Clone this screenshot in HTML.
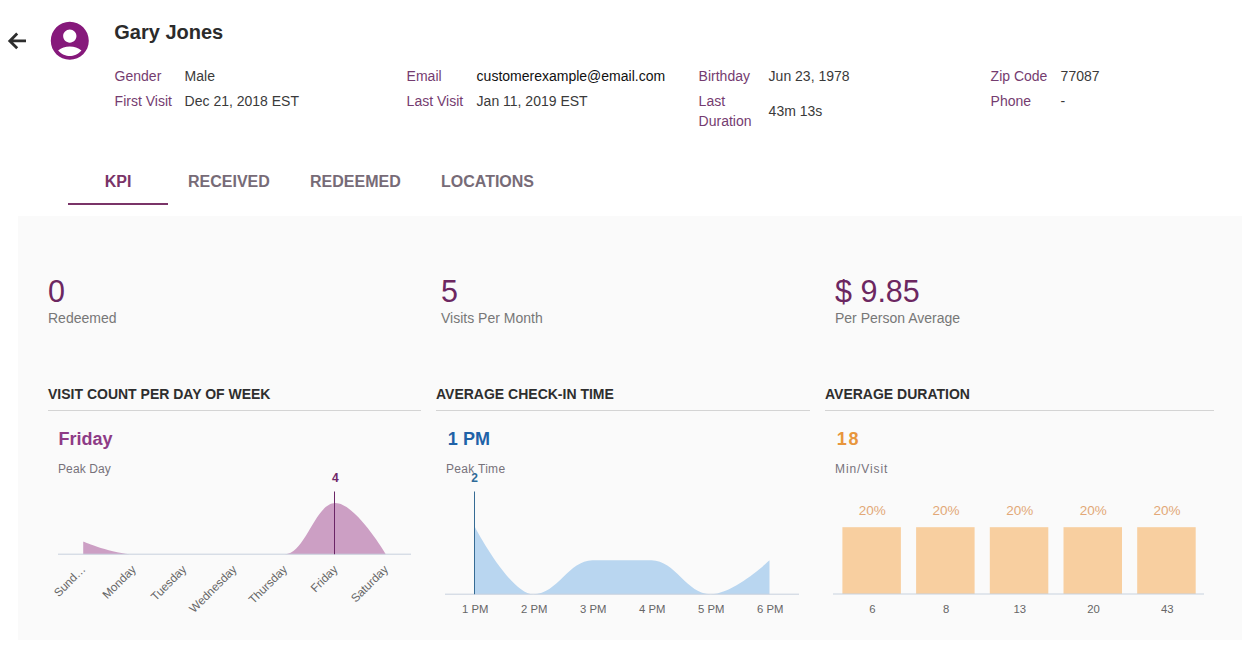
<!DOCTYPE html>
<html><head><meta charset="utf-8"><title>Customer</title>
<style>
html,body{margin:0;padding:0;}
body{width:1255px;height:651px;background:#fff;position:relative;overflow:hidden;font-family:"Liberation Sans",sans-serif;}
.t{position:absolute;white-space:nowrap;margin:0;padding:0;}
.abs{position:absolute;}
svg{position:absolute;overflow:visible;}
svg text{font-family:"Liberation Sans",sans-serif;}
</style></head><body>
<svg style="left:0;top:0" width="40" height="60" viewBox="0 0 40 60"><path fill="none" stroke="#2d2d2d" stroke-width="2.8" stroke-linejoin="miter" stroke-linecap="butt" d="M26 40.9H10 M17.2 33.5L9.8 40.9L17.2 48.3"/></svg>
<svg style="left:47.2px;top:18.0px" width="45.6" height="45.6" viewBox="0 0 24 24"><path fill="#86197b" d="M12 2C6.48 2 2 6.48 2 12s4.48 10 10 10 10-4.48 10-10S17.52 2 12 2zm0 4c1.93 0 3.5 1.57 3.5 3.5S13.93 13 12 13s-3.5-1.57-3.5-3.5S10.07 6 12 6zm0 14c-2.03 0-4.43-.82-6.14-2.88C7.55 15.8 9.68 15 12 15s4.45.8 6.14 2.12C16.43 19.18 14.03 20 12 20z"/></svg>
<div class="t" style="left:114.3px;top:20.700000000000003px;font-size:20px;line-height:22px;color:#2b2b2b;font-weight:bold;">Gary Jones</div>
<div class="t" style="left:114.6px;top:67.7px;font-size:14px;line-height:16px;color:#753c70;font-weight:normal;">Gender</div>
<div class="t" style="left:184.6px;top:67.7px;font-size:14px;line-height:16px;color:#3a3a3a;font-weight:normal;">Male</div>
<div class="t" style="left:114.6px;top:92.7px;font-size:14px;line-height:16px;color:#753c70;font-weight:normal;">First Visit</div>
<div class="t" style="left:184.6px;top:92.7px;font-size:14px;line-height:16px;color:#3a3a3a;font-weight:normal;">Dec 21, 2018 EST</div>
<div class="t" style="left:406.6px;top:67.7px;font-size:14px;line-height:16px;color:#753c70;font-weight:normal;">Email</div>
<div class="t" style="left:476.6px;top:67.7px;font-size:14px;line-height:16px;color:#111;font-weight:normal;">customerexample@email.com</div>
<div class="t" style="left:406.6px;top:92.7px;font-size:14px;line-height:16px;color:#753c70;font-weight:normal;">Last Visit</div>
<div class="t" style="left:476.6px;top:92.7px;font-size:14px;line-height:16px;color:#3a3a3a;font-weight:normal;">Jan 11, 2019 EST</div>
<div class="t" style="left:698.6px;top:67.7px;font-size:14px;line-height:16px;color:#753c70;font-weight:normal;">Birthday</div>
<div class="t" style="left:768.6px;top:67.7px;font-size:14px;line-height:16px;color:#3a3a3a;font-weight:normal;">Jun 23, 1978</div>
<div class="t" style="left:990.6px;top:67.7px;font-size:14px;line-height:16px;color:#753c70;font-weight:normal;">Zip Code</div>
<div class="t" style="left:1060.6px;top:67.7px;font-size:14px;line-height:16px;color:#3a3a3a;font-weight:normal;">77087</div>
<div class="t" style="left:990.6px;top:92.7px;font-size:14px;line-height:16px;color:#753c70;font-weight:normal;">Phone</div>
<div class="t" style="left:1060.6px;top:92.7px;font-size:14px;line-height:16px;color:#3a3a3a;font-weight:normal;">-</div>
<div class="t" style="left:698.6px;top:92.7px;font-size:14px;line-height:16px;color:#753c70;font-weight:normal;">Last</div>
<div class="t" style="left:698.6px;top:112.7px;font-size:14px;line-height:16px;color:#753c70;font-weight:normal;">Duration</div>
<div class="t" style="left:768.6px;top:102.7px;font-size:14px;line-height:16px;color:#3a3a3a;font-weight:normal;">43m 13s</div>
<div class="t" style="left:-82px;width:400px;text-align:center;top:173px;font-size:16px;line-height:17px;color:#7a3468;font-weight:bold;">KPI</div>
<div class="t" style="left:188px;top:173px;font-size:16px;line-height:17px;color:#776b77;font-weight:bold;">RECEIVED</div>
<div class="t" style="left:310px;top:173px;font-size:16px;line-height:17px;color:#776b77;font-weight:bold;">REDEEMED</div>
<div class="t" style="left:441px;top:173px;font-size:16px;line-height:17px;color:#776b77;font-weight:bold;">LOCATIONS</div>
<div class="abs" style="left:68px;top:203px;width:100px;height:2px;background:#7a3468"></div>
<div class="abs" style="left:18px;top:216px;width:1223.5px;height:424px;background:#fafafa"></div>
<div class="t" style="left:48px;top:274px;font-size:30.5px;line-height:34px;color:#6c2761;font-weight:normal;">0</div>
<div class="t" style="left:48px;top:309.9px;font-size:14px;line-height:16px;color:#777;font-weight:normal;">Redeemed</div>
<div class="t" style="left:441px;top:274px;font-size:30.5px;line-height:34px;color:#6c2761;font-weight:normal;">5</div>
<div class="t" style="left:441px;top:309.9px;font-size:14px;line-height:16px;color:#777;font-weight:normal;">Visits Per Month</div>
<div class="t" style="left:835px;top:274px;font-size:30.5px;line-height:34px;color:#6c2761;font-weight:normal;">$ 9.85</div>
<div class="t" style="left:835px;top:309.9px;font-size:14px;line-height:16px;color:#777;font-weight:normal;">Per Person Average</div>
<div class="t" style="left:48px;top:386px;font-size:14px;line-height:16px;color:#2e2e2e;font-weight:bold;">VISIT COUNT PER DAY OF WEEK</div>
<div class="abs" style="left:48px;top:410px;width:373px;height:1px;background:#d4d4d4"></div>
<div class="t" style="left:436px;top:386px;font-size:14px;line-height:16px;color:#2e2e2e;font-weight:bold;">AVERAGE CHECK-IN TIME</div>
<div class="abs" style="left:436px;top:410px;width:374px;height:1px;background:#d4d4d4"></div>
<div class="t" style="left:825px;top:386px;font-size:14px;line-height:16px;color:#2e2e2e;font-weight:bold;">AVERAGE DURATION</div>
<div class="abs" style="left:825px;top:410px;width:389px;height:1px;background:#d4d4d4"></div>
<div class="t" style="left:58.5px;top:428.8px;font-size:18px;line-height:20px;color:#8e3b86;font-weight:bold;letter-spacing:0px;">Friday</div>
<div class="t" style="left:58px;top:462.2px;font-size:12px;line-height:14px;color:#77727a;font-weight:normal;letter-spacing:0.1px;">Peak Day</div>
<div class="t" style="left:447.8px;top:428.8px;font-size:18px;line-height:20px;color:#1f62a8;font-weight:bold;letter-spacing:0.1px;">1 PM</div>
<div class="t" style="left:446px;top:462.2px;font-size:12px;line-height:14px;color:#77727a;font-weight:normal;letter-spacing:0.3px;">Peak Time</div>
<div class="t" style="left:836.8px;top:428.8px;font-size:18px;line-height:20px;color:#e8963c;font-weight:bold;letter-spacing:1.6px;">18</div>
<div class="t" style="left:835px;top:462.2px;font-size:12px;line-height:14px;color:#77727a;font-weight:normal;letter-spacing:0.9px;">Min/Visit</div>
<svg style="left:0;top:0" width="1255" height="651" viewBox="0 0 1255 651">
<path d="M 83.21 541.40 C 83.21 541.40 113.47 554.20 133.64 554.20 C 153.81 554.20 163.90 554.20 184.07 554.20 C 204.24 554.20 214.33 554.20 234.50 554.20 C 254.67 554.20 264.76 554.20 284.93 554.20 C 305.10 554.20 315.19 503.00 335.36 503.00 C 355.53 503.00 385.79 554.20 385.79 554.20 L 385.79 554.2 L 83.21 554.2 Z" fill="#cc9fc4"/>
<rect x="58" y="553.7" width="353" height="1" fill="#c8d1dd"/>
<rect x="334" y="491.5" width="1" height="62.700000000000045" fill="#6b2566"/>
<text x="335.36" y="481.6" text-anchor="middle" font-size="12" font-weight="bold" fill="#6e2668" stroke="#fafafa" stroke-width="1.2" paint-order="stroke">4</text>
<text transform="translate(86.21 570) rotate(-45)" text-anchor="end" font-size="11.7" fill="#666">Sund…</text>
<text transform="translate(136.64 570) rotate(-45)" text-anchor="end" font-size="11.7" fill="#666">Monday</text>
<text transform="translate(187.07 570) rotate(-45)" text-anchor="end" font-size="11.7" fill="#666">Tuesday</text>
<text transform="translate(237.50 570) rotate(-45)" text-anchor="end" font-size="11.7" fill="#666">Wednesday</text>
<text transform="translate(287.93 570) rotate(-45)" text-anchor="end" font-size="11.7" fill="#666">Thursday</text>
<text transform="translate(338.36 570) rotate(-45)" text-anchor="end" font-size="11.7" fill="#666">Friday</text>
<text transform="translate(388.79 570) rotate(-45)" text-anchor="end" font-size="11.7" fill="#666">Saturday</text>
<path d="M 474.50 526.30 C 474.50 526.30 509.90 594.20 533.50 594.20 C 557.10 594.20 568.90 560.25 592.50 560.25 C 616.10 560.25 627.90 560.25 651.50 560.25 C 675.10 560.25 686.90 594.20 710.50 594.20 C 734.10 594.20 769.50 560.25 769.50 560.25 L 769.50 594.2 L 474.50 594.2 Z" fill="#b9d6f0"/>
<rect x="445" y="593.7" width="354" height="1" fill="#c8d1dd"/>
<rect x="474" y="491.5" width="1" height="102.70000000000005" fill="#356b94"/>
<text x="474.50" y="481.6" text-anchor="middle" font-size="12" font-weight="bold" fill="#2e6a98" stroke="#fafafa" stroke-width="1.2" paint-order="stroke">2</text>
<text x="475.30" y="613" text-anchor="middle" font-size="11.3" fill="#666">1 PM</text>
<text x="534.30" y="613" text-anchor="middle" font-size="11.3" fill="#666">2 PM</text>
<text x="593.30" y="613" text-anchor="middle" font-size="11.3" fill="#666">3 PM</text>
<text x="652.30" y="613" text-anchor="middle" font-size="11.3" fill="#666">4 PM</text>
<text x="711.30" y="613" text-anchor="middle" font-size="11.3" fill="#666">5 PM</text>
<text x="770.30" y="613" text-anchor="middle" font-size="11.3" fill="#666">6 PM</text>
<rect x="842.40" y="527.2" width="58.5" height="66.80" fill="#f8cfa0"/>
<text x="872.25" y="515" text-anchor="middle" font-size="13.5" fill="#e2a877">20%</text>
<text x="872.45" y="613" text-anchor="middle" font-size="11.3" fill="#666">6</text>
<rect x="916.10" y="527.2" width="58.5" height="66.80" fill="#f8cfa0"/>
<text x="945.95" y="515" text-anchor="middle" font-size="13.5" fill="#e2a877">20%</text>
<text x="946.15" y="613" text-anchor="middle" font-size="11.3" fill="#666">8</text>
<rect x="989.80" y="527.2" width="58.5" height="66.80" fill="#f8cfa0"/>
<text x="1019.65" y="515" text-anchor="middle" font-size="13.5" fill="#e2a877">20%</text>
<text x="1019.85" y="613" text-anchor="middle" font-size="11.3" fill="#666">13</text>
<rect x="1063.50" y="527.2" width="58.5" height="66.80" fill="#f8cfa0"/>
<text x="1093.35" y="515" text-anchor="middle" font-size="13.5" fill="#e2a877">20%</text>
<text x="1093.55" y="613" text-anchor="middle" font-size="11.3" fill="#666">20</text>
<rect x="1137.20" y="527.2" width="58.5" height="66.80" fill="#f8cfa0"/>
<text x="1167.05" y="515" text-anchor="middle" font-size="13.5" fill="#e2a877">20%</text>
<text x="1167.25" y="613" text-anchor="middle" font-size="11.3" fill="#666">43</text>
<rect x="833" y="593.5" width="371" height="1" fill="#c8d1dd"/>
</svg>
</body></html>
